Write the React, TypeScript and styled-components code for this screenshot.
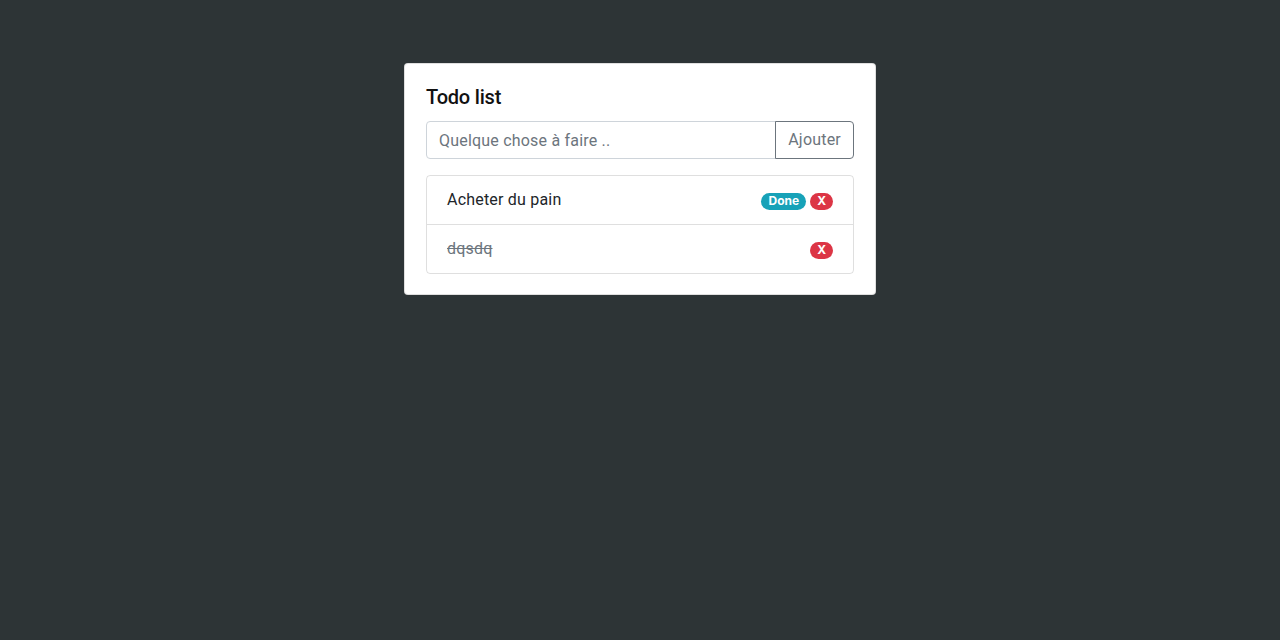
import React from "react";
import styled, { createGlobalStyle } from "styled-components";

const GlobalStyle = createGlobalStyle`
  html, body {
    margin: 0;
    padding: 0;
    background: #2d3436;
    font-family: Roboto, "Noto Sans", "Liberation Sans", sans-serif;
    font-size: 16px;
    line-height: 1.5;
    letter-spacing: 0.2px;
    color: #212529;
  }
  * { box-sizing: border-box; }
`;

const Page = styled.div`
  min-height: 640px;
  padding-top: 63px;
`;

const Card = styled.div`
  width: 472px;
  margin: 0 auto;
  background: #fff;
  border: 1px solid rgba(0, 0, 0, 0.125);
  border-radius: 4px;
`;

const CardBody = styled.div`
  padding: 21px 21px 20px;
`;

const Title = styled.h5`
  margin: 0 0 12px;
  font-size: 20px;
  font-weight: 500;
  line-height: 1.2;
  letter-spacing: -0.2px;
  color: #111;
`;

const InputGroup = styled.div`
  display: flex;
  align-items: stretch;
  height: 38px;
`;

const Input = styled.input`
  flex: 1 1 auto;
  min-width: 0;
  height: 38px;
  padding: 6px 12px;
  font: inherit;
  font-size: 16px;
  letter-spacing: 0.2px;
  color: #495057;
  border: 1px solid #ced4da;
  border-radius: 4px 0 0 4px;
  outline: none;
  &::placeholder {
    color: #6c757d;
    opacity: 1;
  }
`;

const AddButton = styled.button`
  height: 38px;
  margin-left: -1px;
  padding: 6px 12px;
  font: inherit;
  font-size: 16px;
  letter-spacing: 0.2px;
  color: #6c757d;
  background: transparent;
  border: 1px solid #6c757d;
  border-radius: 0 4px 4px 0;
`;

const List = styled.ul`
  list-style: none;
  margin: 16px 0 0;
  padding: 0;
  border: 1px solid rgba(0, 0, 0, 0.125);
  border-radius: 4px;
`;

const Item = styled.li`
  display: flex;
  align-items: center;
  justify-content: space-between;
  padding: 12px 20px;
  & + & {
    border-top: 1px solid rgba(0, 0, 0, 0.125);
  }
`;

const ItemText = styled.span<{ $done?: boolean }>`
  color: ${(p) => (p.$done ? "#6c757d" : "#212529")};
  text-decoration: ${(p) => (p.$done ? "line-through" : "none")};
`;

const Badges = styled.div`
  display: flex;
  gap: 4px;
  padding-top: 2px;
`;

const Badge = styled.span<{ $color: string }>`
  display: inline-block;
  padding: 2.5px 7px;
  font-family: Inter, Roboto, sans-serif;
  font-size: 12px;
  font-weight: 700;
  line-height: 12px;
  letter-spacing: 0;
  color: #fff;
  background: ${(p) => p.$color};
  border-radius: 160px;
`;

export default function App() {
  return (
    <Page>
      <GlobalStyle />
      <Card>
        <CardBody>
          <Title>Todo list</Title>
          <InputGroup>
            <Input placeholder="Quelque chose à faire .." />
            <AddButton>Ajouter</AddButton>
          </InputGroup>
          <List>
            <Item>
              <ItemText>Acheter du pain</ItemText>
              <Badges>
                <Badge $color="#17a2b8">Done</Badge>
                <Badge $color="#dc3545">X</Badge>
              </Badges>
            </Item>
            <Item>
              <ItemText $done>dqsdq</ItemText>
              <Badges>
                <Badge $color="#dc3545">X</Badge>
              </Badges>
            </Item>
          </List>
        </CardBody>
      </Card>
    </Page>
  );
}
